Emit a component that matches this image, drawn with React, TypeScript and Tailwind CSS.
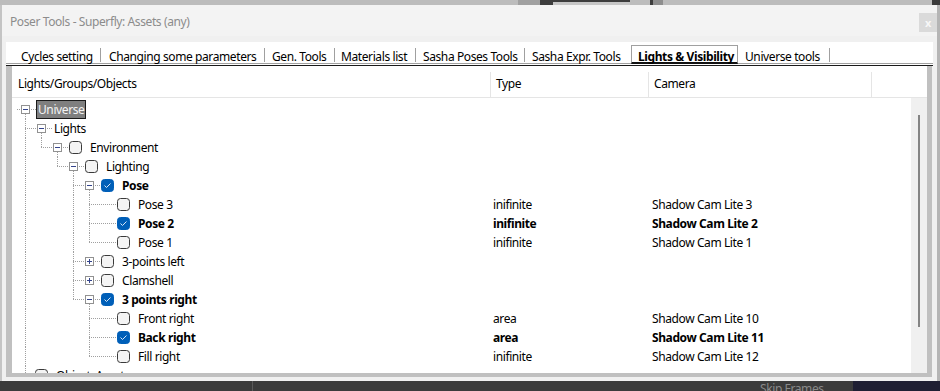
import React from 'react';

type TNode = {
  label: string;
  cb?: 'on' | 'off';
  bold?: boolean;
  type?: string;
  cam?: string;
  children?: TNode[];
  collapsed?: boolean;
  compact?: boolean;
  notLast?: boolean;
  selected?: boolean;
};

const tree: TNode = {
  label: 'Universe',
  selected: true,
  children: [
    {
      label: 'Lights',
      children: [
        {
          label: 'Environment',
          cb: 'off',
          children: [
            {
              label: 'Lighting',
              cb: 'off',
              children: [
                {
                  label: 'Pose',
                  cb: 'on',
                  bold: true,
                  children: [
                    { label: 'Pose 3', cb: 'off', type: 'inifinite', cam: 'Shadow Cam Lite 3' },
                    { label: 'Pose 2', cb: 'on', bold: true, type: 'inifinite', cam: 'Shadow Cam Lite 2' },
                    { label: 'Pose 1', cb: 'off', type: 'inifinite', cam: 'Shadow Cam Lite 1' },
                  ],
                },
                { label: '3-points left', cb: 'off', collapsed: true, children: [] },
                { label: 'Clamshell', cb: 'off', collapsed: true, children: [] },
                {
                  label: '3 points right',
                  cb: 'on',
                  bold: true,
                  children: [
                    { label: 'Front right', cb: 'off', type: 'area', cam: 'Shadow Cam Lite 10' },
                    { label: 'Back right', cb: 'on', bold: true, type: 'area', cam: 'Shadow Cam Lite 11' },
                    { label: 'Fill right', cb: 'off', type: 'inifinite', cam: 'Shadow Cam Lite 12' },
                  ],
                },
              ],
            },
          ],
        },
      ],
    },
    { label: 'Object: Assets', cb: 'off', compact: true, notLast: true },
  ],
};

type Row = { node: TNode; level: number; flags: boolean[] };

function flatten(node: TNode, level: number, flags: boolean[], out: Row[]) {
  out.push({ node, level, flags });
  if (node.children && !node.collapsed) {
    node.children.forEach((c, i) =>
      flatten(c, level + 1, [...flags, i === node.children!.length - 1 && !c.notLast], out)
    );
  }
}

const rows: Row[] = [];
flatten(tree, 0, [true], rows);

const DOT = '#a0a0a0';

function Cell({
  top,
  bottom,
  left,
  right,
  box,
  down,
}: {
  top?: boolean;
  bottom?: boolean;
  left?: boolean;
  right?: boolean;
  box?: 'plus' | 'minus';
  down?: boolean;
}) {
  const d = { stroke: DOT, strokeWidth: 1, strokeDasharray: '1 1' };
  return (
    <svg width="16" height="19" viewBox="0 0 16 19" className="shrink-0">
      {top && bottom && <line x1="8.5" y1="0" x2="8.5" y2="19" {...d} />}
      {top && !bottom && <line x1="8.5" y1="0" x2="8.5" y2="10" {...d} />}
      {!top && bottom && <line x1="8.5" y1="10" x2="8.5" y2="19" {...d} />}
      {left && right && <line x1="0" y1="9.5" x2="16" y2="9.5" {...d} />}
      {left && !right && <line x1="0" y1="9.5" x2="8" y2="9.5" {...d} />}
      {!left && right && <line x1="8" y1="9.5" x2="16" y2="9.5" {...d} />}
      {down && <line x1="8.5" y1="14" x2="8.5" y2="19" {...d} />}
      {box && (
        <>
          <rect x="4.5" y="5.5" width="8" height="8" fill="#ffffff" stroke="#919191" />
          <line x1="6" y1="9.5" x2="11" y2="9.5" stroke="#34448c" />
          {box === 'plus' && <line x1="8.5" y1="7" x2="8.5" y2="12" stroke="#34448c" />}
        </>
      )}
    </svg>
  );
}

function Seg({ w }: { w: number }) {
  return (
    <svg width={w} height="19" viewBox={`0 0 ${w} 19`} className="shrink-0">
      <line x1="0" y1="9.5" x2={w} y2="9.5" stroke={DOT} strokeDasharray="1 1" />
    </svg>
  );
}

function Check({ on }: { on: boolean }) {
  return (
    <svg width="13" height="13" viewBox="0 0 13 13" className="shrink-0">
      {on ? (
        <>
          <rect x="0.5" y="0.5" width="12" height="12" rx="3" fill="#005fb8" stroke="#005fb8" />
          <path d="M3.5 6.5 L5.5 8.5 L9.5 4.5" fill="none" stroke="#dbe8f7" strokeWidth="1" />
        </>
      ) : (
        <rect x="0.5" y="0.5" width="12" height="12" rx="3" fill="#f4f4f4" stroke="#3a3a3a" />
      )}
    </svg>
  );
}

function TreeRow({ r }: { r: Row }) {
  const { node, level: L, flags } = r;
  const cells: React.ReactNode[] = [];
  for (let k = 0; k <= L - 2; k++) {
    const v = !flags[k + 1];
    cells.push(<Cell key={'g' + k} top={v} bottom={v} />);
  }
  if (L >= 1) cells.push(<Cell key="c" top bottom={!flags[L]} right />);
  if (!node.compact) {
    const has = !!node.children;
    cells.push(
      <Cell
        key="e"
        left
        right
        box={has ? (node.collapsed ? 'plus' : 'minus') : undefined}
        down={has && !node.collapsed && node.children!.length > 0}
      />
    );
  }
  const fw = node.bold ? 'font-bold' : '';
  return (
    <div className="flex h-[19px] leading-[19px] whitespace-nowrap">
      <div className="w-[478px] flex items-center pl-[5px]">
        {cells}
        {node.cb ? (
          <>
            <Seg w={node.compact ? 2 : 4} />
            <Check on={node.cb === 'on'} />
            <span className={`ml-[8px] ${fw}`}>{node.label}</span>
          </>
        ) : (
          <>
            <Seg w={3} />
            {node.selected ? (
              <span className="h-[19px] leading-[17px] px-px border border-[#1a1a1a] bg-[#7f7f7f] text-[#f4f4f4]">
                {node.label}
              </span>
            ) : (
              <span className={`ml-[2px] ${fw}`}>{node.label}</span>
            )}
          </>
        )}
      </div>
      <div className={`w-[158px] pl-[3px] ${fw}`}>{node.type ?? ''}</div>
      <div className={`pl-[4px] ${fw}`}>{node.cam ?? ''}</div>
    </div>
  );
}

type Tab = { label: string; w: string; pl: string; sep: boolean; active?: boolean };

function Tabs() {
  const tabs: Tab[] = [
    { label: 'Cycles setting', w: 'w-[95px]', pl: 'pl-[15px]', sep: true },
    { label: 'Changing some parameters', w: 'w-[164px]', pl: 'pl-[8px]', sep: true },
    { label: 'Gen. Tools', w: 'w-[70px]', pl: 'pl-[7px]', sep: true },
    { label: 'Materials list', w: 'w-[81px]', pl: 'pl-[6px]', sep: true },
    { label: 'Sasha Poses Tools', w: 'w-[109px]', pl: 'pl-[7px]', sep: true },
    { label: 'Sasha Expr. Tools', w: 'w-[106px]', pl: 'pl-[7px]', sep: false },
    { label: 'Lights & Visibility', w: 'w-[107px]', pl: 'pl-[6px]', sep: false, active: true },
    { label: 'Universe tools', w: 'w-[92px]', pl: 'pl-[7px]', sep: true },
  ];
  return (
    <div className="flex h-[22px] border-b border-[#a0a0a0]">
      {tabs.map((t) =>
        t.active ? (
          <div
            key={t.label}
            className={`${t.w} shrink-0 mt-[3px] -mb-px border-x border-t border-[#a0a0a0] border-b-2 border-b-[#111111] ${t.pl} pt-[3px] leading-[15px] font-bold whitespace-nowrap`}
          >
            {t.label}
          </div>
        ) : (
          <div key={t.label} className={`${t.w} shrink-0 flex ${t.pl}`}>
            <div className="pt-[7px] leading-[15px] whitespace-nowrap">{t.label}</div>
            {t.sep && <div className="ml-auto mt-[6px] w-px h-[14px] bg-[#a0a0a0]" />}
          </div>
        )
      )}
    </div>
  );
}

export default function App() {
  return (
    <div className="w-[940px] h-[391px] overflow-hidden bg-[#3b3b3b] font-['Noto_Sans',sans-serif] text-[12px] tracking-[-0.4px] text-black flex flex-col">
      {/* background strip above window */}
      <div className="flex h-[5px] shrink-0 bg-[#bcbcbc]">
        <div className="w-[518px]" />
        <div className="w-[22px] bg-[#a0a0a0]" />
        <div className="w-[13px] bg-[#3d3d3d]" />
        <div className="w-[77px] bg-[#c6c6c6] border-t-2 border-[#3d3d3d]" />
        <div className="w-[20px]" />
        <div className="w-[3px] bg-[#3d3d3d]" />
        <div className="w-[10px] bg-[#8e8e8e]" />
        <div className="flex-1" />
        <div className="w-[8px] bg-[#3a3a3a]" />
      </div>

      {/* window */}
      <div className="h-[376px] shrink-0 flex flex-col bg-[#f0f0f0] border-l-2 border-l-[#c4c4c4] border-r-[3px] border-r-[#b5b5b5]">
        <div className="h-[31px] shrink-0 flex items-start justify-between bg-[#f3f3f3]">
          <div className="pl-[8px] pt-[9px] leading-[16px] text-[#8c8c8c] whitespace-nowrap">
            Poser Tools - Superfly: Assets (any)
          </div>
          <div className="mt-[8px] w-[18px] h-[19px] bg-[#dadada] flex items-center justify-center text-[11px] leading-none text-[#f7f7f7] font-bold">
            x
          </div>
        </div>

        <div className="pt-[6px] px-[4px] shrink-0">
          <div className="bg-white">
            <Tabs />
            <div className="h-px bg-white" />
            <div className="h-px bg-[#1a1a1a]" />
          </div>
        </div>

        <div className="ml-[4px] mr-[5px] h-[311px] shrink-0 flex flex-col border-l-[6px] border-r-[5px] border-b-[4px] border-[#c0c0c0]">
          {/* header */}
          <div className="flex h-[32px] shrink-0 border-b border-[#e5e5e5] bg-white whitespace-nowrap">
            <div className="w-[478px] pl-[6px] pt-[10px] leading-[16px]">Lights/Groups/Objects</div>
            <div className="w-[158px] flex">
              <div className="w-px h-[25px] self-end bg-[#e5e5e5]" />
              <div className="pl-[5px] pt-[10px] leading-[16px]">Type</div>
            </div>
            <div className="w-[223px] flex">
              <div className="w-px h-[25px] self-end bg-[#e5e5e5]" />
              <div className="pl-[5px] pt-[10px] leading-[16px]">Camera</div>
            </div>
            <div className="flex-1 flex">
              <div className="w-px h-[25px] self-end bg-[#e5e5e5]" />
            </div>
          </div>
          {/* body */}
          <div className="flex h-[275px] shrink-0">
            <div className="w-[899px] overflow-hidden bg-white pt-[2px]">
              {rows.map((r, i) => (
                <TreeRow key={i} r={r} />
              ))}
            </div>
            <div className="w-[16px] bg-[#f0f0f0] pt-[17px]">
              <div className="ml-[7px] w-[2px] h-[212px] bg-[#858585]" />
            </div>
          </div>
        </div>
      </div>

      {/* background strip below window */}
      <div className="flex h-[10px] shrink-0 bg-[#3b3b3b] overflow-hidden">
        <div className="w-[252px]" />
        <div className="w-px bg-[#5a5a5a]" />
        <div className="w-[507px]" />
        <div className="pt-[2px] leading-[12px] text-[#8a8a8a] whitespace-nowrap w-[93px]">Skip Frames</div>
        <div className="flex-1 bg-[#1f1f33]" />
      </div>
    </div>
  );
}
